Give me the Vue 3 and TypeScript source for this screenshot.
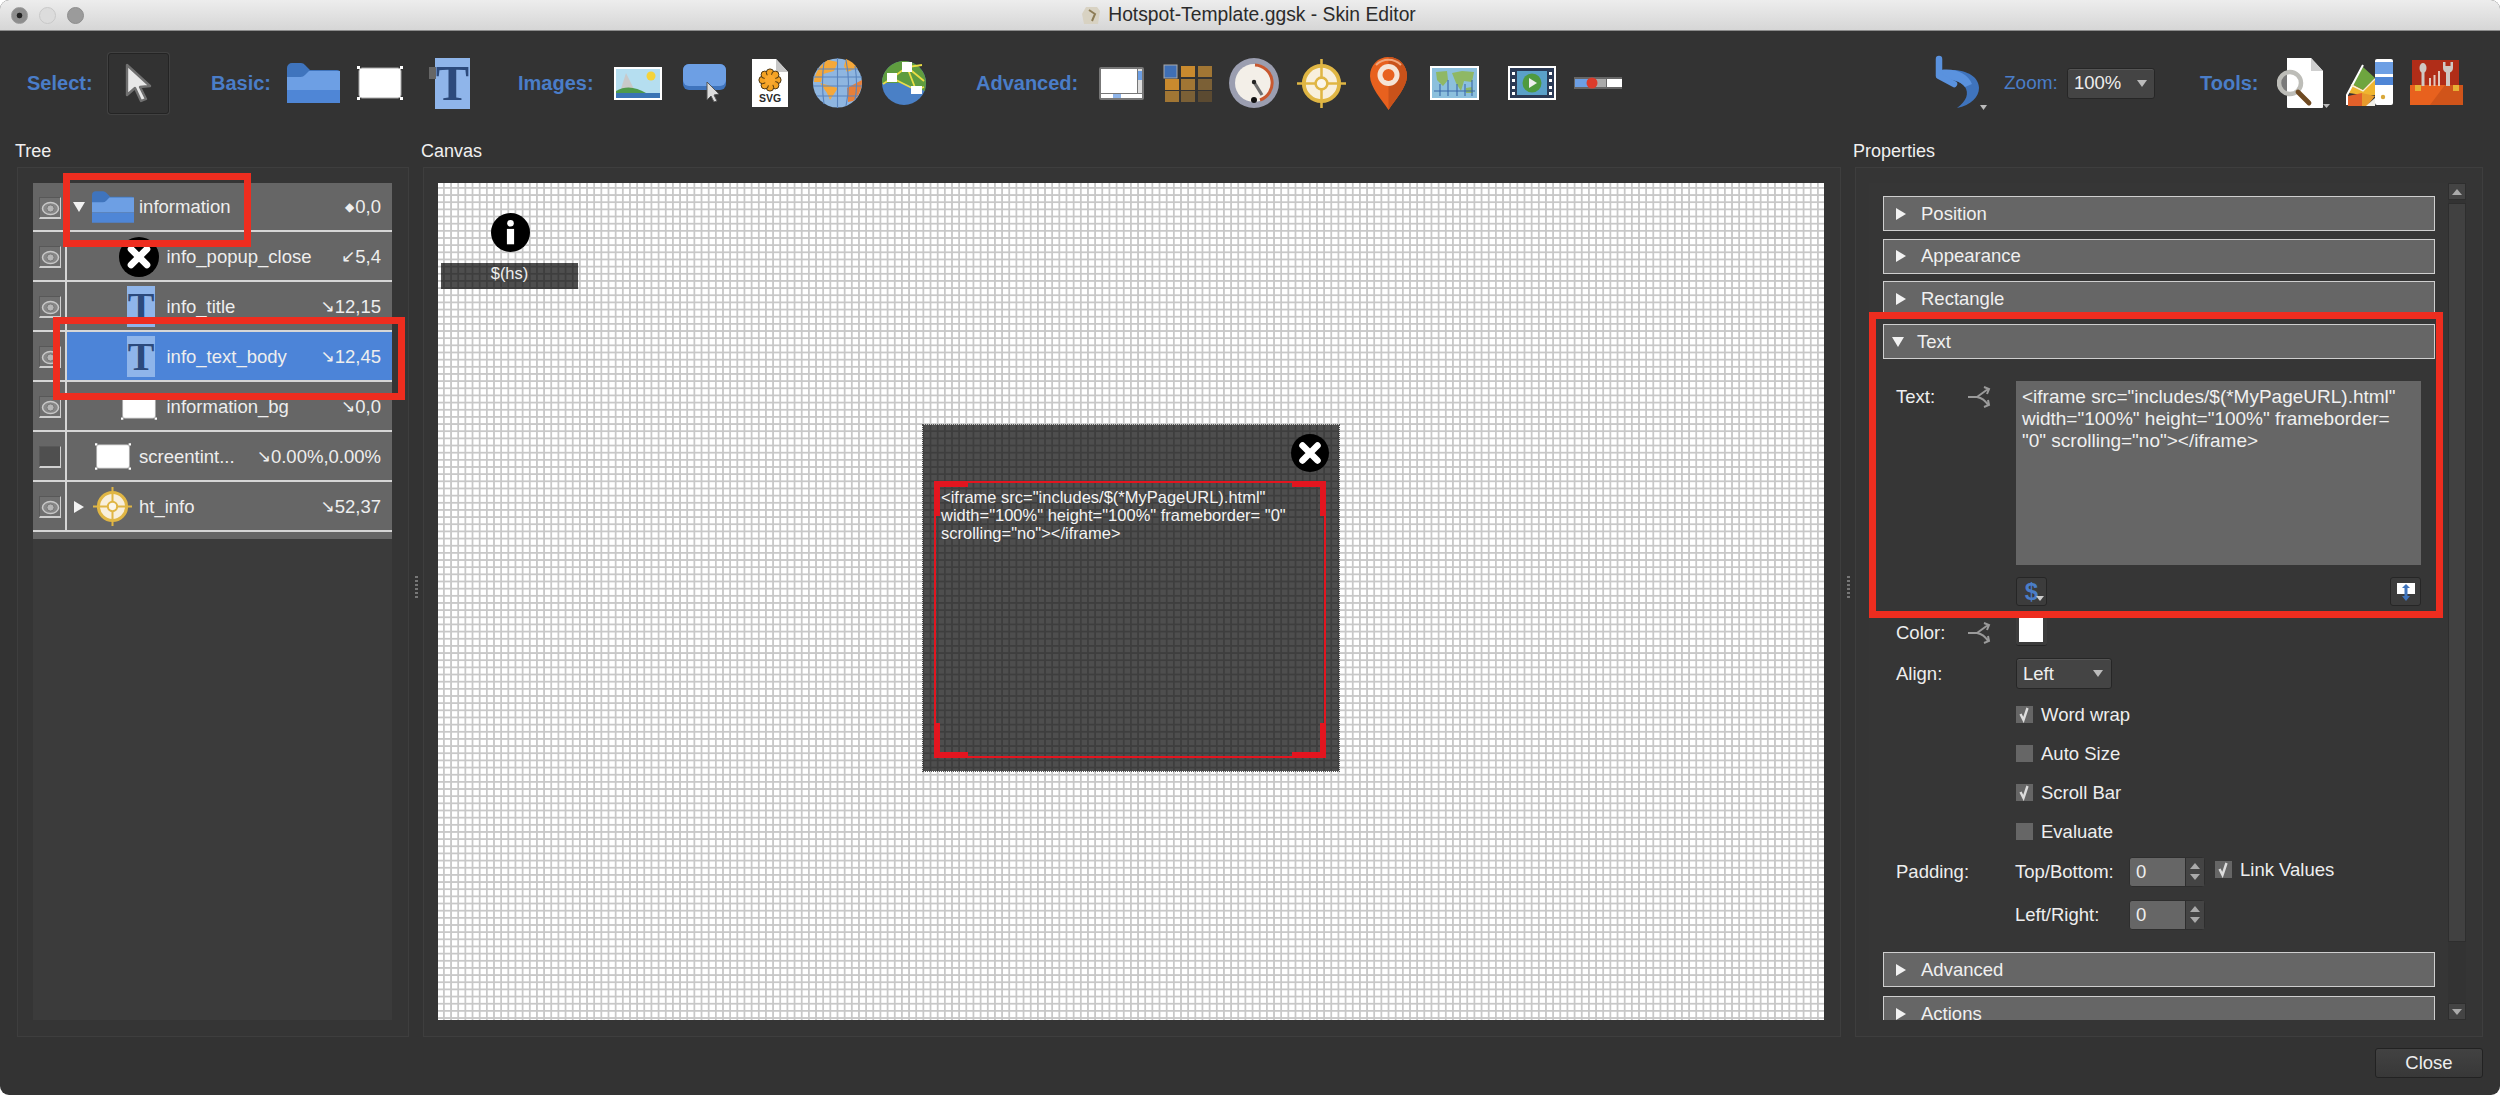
<script setup lang="ts">
interface TreeRow {
  name: string
  arrow: string
  value: string
  icon: string
  depth: number
  visible: boolean
  expander?: 'open' | 'closed'
  selected?: boolean
  iconClass: string
}

const rows: TreeRow[] = [
  { name: 'information', arrow: '◆', value: '0,0', icon: '#s-folder', depth: 0, visible: true, expander: 'open', iconClass: 'ic-folder' },
  { name: 'info_popup_close', arrow: '↙', value: '5,4', icon: '#s-close', depth: 1, visible: true, iconClass: 'ic-close' },
  { name: 'info_title', arrow: '↘', value: '12,15', icon: 'text', depth: 1, visible: true, iconClass: '' },
  { name: 'info_text_body', arrow: '↘', value: '12,45', icon: 'text', depth: 1, visible: true, selected: true, iconClass: '' },
  { name: 'information_bg', arrow: '↘', value: '0,0', icon: '#s-rect', depth: 1, visible: true, iconClass: 'ic-rect' },
  { name: 'screentint...', arrow: '↘', value: '0.00%,0.00%', icon: '#s-rect', depth: 0, visible: false, iconClass: 'ic-rect' },
  { name: 'ht_info', arrow: '↘', value: '52,37', icon: '#s-cross', depth: 0, visible: true, expander: 'closed', iconClass: 'ic-cross' }
]

const topSections = ['Position', 'Appearance', 'Rectangle']
const checks = [
  { label: 'Word wrap', on: true },
  { label: 'Auto Size', on: false },
  { label: 'Scroll Bar', on: true },
  { label: 'Evaluate', on: false }
]
const iframeCode = '<iframe src="includes/$(*MyPageURL).html" width="100%" height="100%" frameborder= "0" scrolling="no"></iframe>'
const petals = [0, 45, 90, 135, 180, 225, 270, 315].map((deg) => ({
  cx: 19 + 7.4 * Math.cos((deg * Math.PI) / 180),
  cy: 22 + 7.4 * Math.sin((deg * Math.PI) / 180)
}))
</script>

<template>
  <div class="win">
    <svg class="defs" width="0" height="0" aria-hidden="true">
      <symbol id="s-folder" viewBox="0 0 53 40">
        <path d="M0 5a5 5 0 0 1 5-5h9a5 5 0 0 1 4 2l5 5h27a3 3 0 0 1 3 3v6H0z" fill="#3f74bd" />
        <path d="M0 14h13a6 6 0 0 0 5-2l4-4h31v19H0z" fill="#6d9fe4" />
        <path d="M0 27h53v13H0z" fill="#4f86d6" />
      </symbol>
      <symbol id="s-close" viewBox="0 0 38 38">
        <circle cx="19" cy="19" r="19" fill="#000" />
        <path d="M11.500 11.500L26.500 26.500M26.500 11.500L11.500 26.500" stroke="#fff" stroke-width="6.500" stroke-linecap="round" />
      </symbol>
      <symbol id="s-rect" viewBox="0 0 46 34">
        <rect x="2" y="2" width="42" height="30" rx="3" fill="#fff" stroke="#a8a8a8" />
        <path d="M0 0h3v3H0zM43 0h3v3h-3zM0 31h3v3H0zM43 31h3v3h-3z" fill="#fff" />
      </symbol>
      <symbol id="s-cross" viewBox="0 0 50 50">
        <circle cx="25" cy="25" r="18" fill="#f8efdc" stroke="#e0b644" stroke-width="4" />
        <path d="M25 0v50M0 25h50" stroke="#e0b644" stroke-width="2.600" />
        <circle cx="25" cy="25" r="6" fill="#fbf6ea" stroke="#e0b644" stroke-width="2.600" />
      </symbol>
      <symbol id="s-cursor" viewBox="0 0 30 42">
        <path d="M3 3v30l8-7 6 13 5-2-6-12 10-1z" fill="#e8e8e8" stroke="#707070" stroke-width="2.400" stroke-linejoin="round" />
      </symbol>
      <symbol id="s-share" viewBox="0 0 24 22">
        <path d="M0 11h9M9 11L20 3M9 11c5 1 8 3 11 8M16 1l5 2-2 5M16 21l5-2-1-5" fill="none" stroke="#9a9a9a" stroke-width="2" />
      </symbol>
      <symbol id="s-eye" viewBox="0 0 21 21">
        <ellipse cx="10.500" cy="10.500" rx="8" ry="6" fill="#888" stroke="#c8c8c8" stroke-width="1.500" />
        <circle cx="10.500" cy="10.500" r="3.600" fill="#b5b5b5" stroke="#777" />
      </symbol>
    </svg>

    <header class="titlebar">
      <div class="lights">
        <span class="light l1"></span>
        <span class="light l2"></span>
        <span class="light l3"></span>
      </div>
      <div class="title">
        <svg class="title-ic" width="21" height="17" viewBox="0 0 21 17">
          <path d="M5 0h11l3 4-2 13H3L1 7z" fill="#d8d2c2" />
          <path d="M8 3l6 4-3 7" fill="none" stroke="#8d7c55" stroke-width="2" />
        </svg>
        <span>Hotspot-Template.ggsk - Skin Editor</span>
      </div>
    </header>

    <div class="toolbar">
      <span class="tb-label lb-select">Select:</span>
      <button class="select-btn">
        <svg width="30" height="42"><use href="#s-cursor" /></svg>
      </button>

      <span class="tb-label lb-basic">Basic:</span>
      <svg class="m-folder" width="53" height="40"><use href="#s-folder" /></svg>
      <svg class="m-rect" width="46" height="34"><use href="#s-rect" /></svg>
      <span class="t-ic m-text"><b>T</b></span>

      <span class="tb-label lb-images">Images:</span>
      <svg class="m-image" width="48" height="33" viewBox="0 0 48 33">
        <rect width="48" height="33" fill="#fff" />
        <rect x="2" y="2" width="44" height="29" fill="#b5def0" />
        <circle cx="37" cy="9" r="4.500" fill="#f5d33a" />
        <path d="M6 25L12 6l8 16z" fill="#c9c9c9" />
        <path d="M2 24c10-6 20-4 30 2v2H2z" fill="#4f9a4b" />
        <rect x="2" y="26" width="44" height="5" fill="#3a74b5" />
      </svg>
      <svg class="m-btn" width="43" height="38" viewBox="0 0 43 38">
        <rect y="0" width="43" height="26" rx="6" fill="#3f74bd" />
        <rect y="0" width="43" height="22" rx="6" fill="#6d9fe4" />
        <path d="M24 18v18l4-4 3 6 3-1-3-6 5-1z" fill="#ddd" stroke="#555" stroke-width="1" />
      </svg>
      <div class="svg-doc m-svg">
        <svg width="38" height="50" viewBox="0 0 38 50">
          <path d="M1 1h24l12 13v35H1z" fill="#fff" />
          <path d="M25 1v13h12z" fill="#c7c7c7" />
          <circle v-for="(p, i) in petals" :key="i" :cx="p.cx" :cy="p.cy" r="3.700" fill="#f4a223" stroke="#3a2a10" stroke-width=".9" />
          <circle cx="19" cy="22" r="5.500" fill="#f9a82e" />
        </svg>
        <span>SVG</span>
      </div>
      <svg class="m-globe" width="49" height="50" viewBox="0 0 49 50">
        <circle cx="24.500" cy="25" r="24.500" fill="#8fb6e0" />
        <path d="M1 24C2 14 8 6 15 2l10 2-4 9-11 3-2 8zM7 25l18 5-8 12-3-7z" fill="#f5a83a" />
        <path d="M33 1c5 2 9 5 11 9l-10 4-3-6z" fill="#f5a83a" />
        <path d="M34 30l15-8c0 9-3 16-9 21l-5 1z" fill="#e8803a" />
        <path d="M4 11h41M0 19h49M0 28h49M4 38h41M11 4c-2 14-2 28 0 42M24.500 0v50M33 2c3 14 3 32 0 46M42 8c2 12 2 24 0 34" fill="none" stroke="#5a84bd" stroke-width="1.100" />
      </svg>
      <svg class="m-globe2" width="44" height="44" viewBox="0 0 44 44">
        <circle cx="22" cy="22" r="22" fill="#4a80c6" />
        <path d="M0 22C0 10 10 0 22 0s22 10 22 22l-1 8-22-8z" fill="#5f9c3f" />
        <path d="M1 23L10 17M10 17L25 6 40 4M25 6L34 29M10 17l24 12M34 29l8-3M25 6l17 14" fill="none" stroke="#eadd45" stroke-width="1.800" />
        <rect x="20" y="1" width="10" height="10" fill="#fff" />
        <rect x="5" y="12" width="10" height="9" fill="#fff" />
        <rect x="29" y="25" width="11" height="8" fill="#fff" />
      </svg>

      <span class="tb-label lb-adv">Advanced:</span>
      <svg class="m-win" width="45" height="33" viewBox="0 0 45 33">
        <rect width="45" height="33" rx="2" fill="#777" />
        <rect x="2" y="2" width="36" height="24" fill="#fff" />
        <rect x="39" y="2" width="4" height="24" fill="#ddd" />
        <rect x="39" y="4" width="4" height="9" fill="#6d9fe4" />
        <rect x="2" y="27" width="41" height="4" fill="#fff" />
        <rect x="14" y="27" width="8" height="4" fill="#8fb5ea" />
      </svg>
      <svg class="m-grid" width="50" height="38" viewBox="0 0 50 38">
        <rect x="1" y="1" width="13" height="13" fill="#3f6fb5" stroke="#aaa" />
        <rect x="18" y="2" width="14" height="11" fill="#c98a2e" />
        <rect x="35" y="2" width="14" height="11" fill="#a17634" />
        <rect x="2" y="15" width="14" height="11" fill="#c98a2e" />
        <rect x="18" y="15" width="14" height="11" fill="#a17634" />
        <rect x="35" y="15" width="14" height="11" fill="#7b6036" />
        <rect x="2" y="27" width="14" height="11" fill="#a17634" />
        <rect x="18" y="27" width="14" height="11" fill="#7b6036" />
        <rect x="35" y="27" width="14" height="11" fill="#5b4a31" />
      </svg>
      <svg class="m-gauge" width="50" height="50" viewBox="0 0 50 50">
        <circle cx="25" cy="25" r="25" fill="#9b9eb0" />
        <circle cx="25" cy="25" r="19" fill="#f3efe8" />
        <path d="M26 7a18 18 0 0 1 5 35" fill="none" stroke="#c8582f" stroke-width="3" />
        <path d="M25 24L33 37" stroke="#6e6e6e" stroke-width="3.200" />
        <circle cx="25" cy="24" r="2.200" fill="#222" />
        <circle cx="25" cy="42" r="3" fill="#111" />
      </svg>
      <svg class="m-cross" width="49" height="49"><use href="#s-cross" /></svg>
      <svg class="m-pin" width="37" height="53" viewBox="0 0 37 53">
        <path d="M18.500 0C8 0 0 8 0 19c0 11 12 24 18.500 34C25 43 37 30 37 19 37 8 29 0 18.500 0z" fill="#e8611e" />
        <path d="M18.500 0C29 0 37 8 37 19c0 11-12 24-18.500 34z" fill="#c9521a" />
        <path d="M6 8c7-7 18-7 25 0" fill="none" stroke="#f0a67c" stroke-width="2" />
        <circle cx="18.500" cy="18" r="11" fill="#f5e4d6" />
        <circle cx="18.500" cy="18" r="6" fill="#e8611e" />
      </svg>
      <svg class="m-map" width="49" height="34" viewBox="0 0 49 34">
        <rect width="49" height="34" fill="#fff" />
        <rect x="2" y="2" width="45" height="30" fill="#8cc0dd" />
        <path d="M6 6l11-1 1 9-5 6-6-6zM22 7l10-2 12 1-2 10-8-1-3 10-5-8zM36 22l6-1 1 6h-7z" fill="#8fb864" />
        <path d="M10 18v12M18 14v16M27 18v12M35 18v12M42 14v16M4 25h41" stroke="#3b68a8" stroke-width="1.100" />
      </svg>
      <svg class="m-video" width="48" height="34" viewBox="0 0 48 34">
        <rect width="48" height="34" fill="#fff" />
        <rect x="2" y="2" width="44" height="30" fill="#2b3a55" />
        <rect x="9" y="5" width="30" height="24" fill="#5aa0c8" />
        <circle cx="24" cy="17" r="9.500" fill="#4f9a3f" />
        <path d="M21 12l8 5-8 5z" fill="#eee" />
        <path d="M4 6h3v3H4zM4 13h3v3H4zM4 20h3v3H4zM4 26h3v3H4zM41 6h3v3h-3zM41 13h3v3h-3zM41 20h3v3h-3zM41 26h3v3h-3z" fill="#fff" />
      </svg>
      <svg class="m-slider" width="48" height="12" viewBox="0 0 48 12">
        <rect width="48" height="12" fill="#666" />
        <rect x="1" y="2" width="14" height="8" fill="#6d9fe4" />
        <rect x="15" y="2" width="17" height="8" fill="#aaa" />
        <rect x="33" y="2" width="15" height="8" fill="#fff" />
        <circle cx="18" cy="6" r="5.500" fill="#dc3b2a" />
      </svg>

      <svg class="m-undo" width="52" height="56" viewBox="0 0 52 56">
        <path d="M6 16C27 12 44 20 44 33c0 9-8 17-22 20 10-7 12-15 8-21-4-6-14-8-24-9z" fill="#3f74bd" />
        <path d="M6 15c15-2 27 4 31 14l-7 3c-4-6-14-8-24-9z" fill="#5a92de" />
        <path d="M4 4v17l15 8" fill="none" stroke="#5a92de" stroke-width="6.500" stroke-linecap="round" stroke-linejoin="round" />
        <path d="M45 50h7l-3.500 5z" fill="#bbb" />
      </svg>
      <span class="tb-label lb-zoom">Zoom:</span>
      <div class="combo zoom-combo"><span>100%</span><i class="tri-down"></i></div>
      <span class="tb-label lb-tools">Tools:</span>
      <svg class="m-doc" width="53" height="50" viewBox="0 0 53 50">
        <path d="M10 0h24l12 13v36a1 1 0 0 1-1 1H11a1 1 0 0 1-1-1z" fill="#fff" />
        <path d="M34 0v13h12z" fill="#cfcfcf" />
        <circle cx="13" cy="25" r="11" fill="#fff" fill-opacity=".35" stroke="#bdbdb8" stroke-width="4.500" />
        <path d="M21 34l11 11" stroke="#6f4a22" stroke-width="4.800" stroke-linecap="round" />
        <path d="M46 46h7l-3.500 4z" fill="#bbb" />
      </svg>
      <svg class="m-pal" width="47" height="48" viewBox="0 0 47 48">
        <path d="M6 25L17 8l12 11-12 12z" fill="#6ea53f" />
        <path d="M3 34l3-9 11 6 12-12v17l-13 0z" fill="#efb52f" />
        <path d="M2 37l14-3v13H2z" fill="#e2602a" />
        <path d="M16 34l13 3-8 10h-5z" fill="#e79a2c" />
        <path d="M1 46V36L17 6" fill="none" stroke="#fff" stroke-width="2" />
        <path d="M5 26l12 6 12-12" fill="none" stroke="#f4f0d8" stroke-width="1.400" />
        <path d="M20 47l9-8v8z" fill="#f1efe8" />
        <rect x="29" y="0" width="18" height="46" rx="2" fill="#fff" />
        <rect x="29" y="3" width="18" height="12" fill="#6d9fe4" />
        <rect x="29" y="18" width="18" height="8" fill="#4f86d6" />
        <circle cx="37" cy="38" r="2.200" fill="#d9a83a" />
      </svg>
      <svg class="m-box" width="53" height="46" viewBox="0 0 53 46">
        <rect x="2" width="47" height="27" fill="#b02d18" />
        <rect x="0" y="25" width="53" height="20" fill="#e8611e" />
        <path d="M20 45l15-20h18v20z" fill="#d0541a" />
        <ellipse cx="13" cy="8" rx="3.500" ry="5" fill="#cfc9c4" />
        <rect x="11.500" y="11" width="3" height="15" fill="#cfc9c4" />
        <path d="M19 18h2v8h-2zM23.500 15h2v11h-2zM28 11h2v15h-2z" fill="#e2c8bd" />
        <path d="M33 2v6a5 5 0 0 0 3 4.500V26h4V12.500A5 5 0 0 0 43 8V2l-2.500 0v4h-5V2z" fill="#cfc9c4" />
        <rect x="5" y="25" width="6" height="6" fill="#e6b035" />
        <rect x="43" y="25" width="6" height="6" fill="#e6b035" />
      </svg>
    </div>

    <main class="main">
      <section class="col col-tree">
        <h2 class="col-title">Tree</h2>
        <div class="panel tree-panel">
          <div class="tree">
            <div v-for="row in rows" :key="row.name" class="row" :class="{ selected: row.selected }">
              <div class="eye-col">
                <span class="eye-box" :class="{ off: !row.visible }">
                  <svg v-if="row.visible" width="21" height="21"><use href="#s-eye" /></svg>
                </span>
              </div>
              <div class="row-body" :class="'depth-' + row.depth">
                <span class="expander">
                  <i v-if="row.expander === 'open'" class="tri-open"></i>
                  <i v-else-if="row.expander === 'closed'" class="tri-closed"></i>
                </span>
                <span class="icon-slot">
                  <span v-if="row.icon === 'text'" class="t-ic t-small"><b>T</b></span>
                  <svg v-else :class="row.iconClass"><use :href="row.icon" /></svg>
                </span>
                <span class="name">{{ row.name }}</span>
                <span class="val"><small :class="{ dia: row.arrow === '◆' }">{{ row.arrow }}</small>{{ row.value }}</span>
              </div>
            </div>
            <div class="row-stub"></div>
          </div>
        </div>
      </section>

      <div class="splitter"><i></i></div>

      <section class="col col-canvas">
        <h2 class="col-title">Canvas</h2>
        <div class="panel canvas-panel">
          <div class="canvas">
            <svg class="node-info" width="39" height="39" viewBox="0 0 38 38">
              <circle cx="19" cy="19" r="19" fill="#000" />
              <circle cx="19" cy="10" r="3.200" fill="#fff" />
              <rect x="15.500" y="15.500" width="7" height="15" fill="#fff" />
            </svg>
            <div class="node-hs">$(hs)</div>
            <div class="node-popup">
              <svg class="node-close" width="38" height="38"><use href="#s-close" /></svg>
              <div class="node-frame">
                <p class="node-text">&lt;iframe src="includes/$(*MyPageURL).html"<br />width="100%" height="100%" frameborder= "0"<br />scrolling="no"&gt;&lt;/iframe&gt;</p>
                <span class="corner tl"></span>
                <span class="corner tr"></span>
                <span class="corner bl"></span>
                <span class="corner br"></span>
              </div>
            </div>
          </div>
        </div>
      </section>

      <div class="splitter"><i></i></div>

      <section class="col col-props">
        <h2 class="col-title">Properties</h2>
        <div class="panel props-panel">
          <div class="props-scroll">
            <div v-for="s in topSections" :key="s" class="sec"><i class="tri-closed"></i>{{ s }}</div>
            <div class="sec"><i class="tri-open"></i>Text</div>

            <div class="frow text-row">
              <label>Text:</label>
              <svg class="share" width="24" height="22"><use href="#s-share" /></svg>
              <div class="textarea">{{ iframeCode }}</div>
            </div>
            <div class="frow btn-row">
              <span></span><span></span>
              <div class="btn-line">
                <button class="mini"><b>$</b><i class="mini-tri"></i></button>
                <button class="mini">
                  <svg width="24" height="24" viewBox="0 0 24 24">
                    <rect x="3" y="3" width="18" height="11" fill="#fff" />
                    <path d="M12 4l4 4h-2.500v8H16l-4 5-4-5h2.500V8H8z" fill="#3f74bd" />
                  </svg>
                </button>
              </div>
            </div>
            <div class="frow color-row">
              <label>Color:</label>
              <svg class="share" width="24" height="22"><use href="#s-share" /></svg>
              <div class="swatch"><span></span></div>
            </div>
            <div class="frow align-row">
              <label>Align:</label>
              <span></span>
              <div class="combo align-combo"><span>Left</span><i class="tri-down"></i></div>
            </div>
            <div v-for="c in checks" :key="c.label" class="frow check-row">
              <span></span><span></span>
              <div class="check-line">
                <span class="check"><svg v-if="c.on" width="17" height="17" viewBox="0 0 17 17"><path d="M4.500 8l3 6 4-12" fill="none" stroke="#ddd" stroke-width="2.400" /></svg></span>
                {{ c.label }}
              </div>
            </div>
            <div class="frow pad-row pad-first">
              <label>Padding:</label>
              <span></span>
              <div class="pad-line">
                <span class="pad-name">Top/Bottom:</span>
                <div class="spin"><span>0</span><em><i class="up"></i><i class="down"></i></em></div>
                <div class="check-line link">
                  <span class="check"><svg width="17" height="17" viewBox="0 0 17 17"><path d="M4.500 8l3 6 4-12" fill="none" stroke="#ddd" stroke-width="2.400" /></svg></span>
                  Link Values
                </div>
              </div>
            </div>
            <div class="frow pad-row pad-second">
              <span></span><span></span>
              <div class="pad-line">
                <span class="pad-name">Left/Right:</span>
                <div class="spin"><span>0</span><em><i class="up"></i><i class="down"></i></em></div>
              </div>
            </div>
            <div class="sec sec-adv"><i class="tri-closed"></i>Advanced</div>
            <div class="sec sec-act"><i class="tri-closed"></i>Actions</div>
          </div>
          <div class="vscroll">
            <span class="sb-btn"><i class="up"></i></span>
            <span class="sb-thumb"></span>
            <span class="sb-btn sb-end"><i class="down"></i></span>
          </div>
        </div>
      </section>
    </main>

    <footer class="footer"><button class="close-btn">Close</button></footer>

    <div class="mark mark-a"></div>
    <div class="mark mark-b"></div>
    <div class="mark mark-c"></div>
  </div>
</template>

<style>
html, body { margin: 0; background: #fff; }
</style>

<style scoped>
* { box-sizing: border-box; }
.win {
  position: relative;
  width: 2500px;
  height: 1095px;
  display: flex;
  flex-direction: column;
  background: #333;
  color: #eee;
  font-family: "Liberation Sans", Arial, sans-serif;
  font-size: 18.500px;
  border-radius: 9px;
  overflow: hidden;
}
.defs { display: block; height: 0; width: 0; }
svg { display: block; flex: none; }
button { font: inherit; color: inherit; padding: 0; }

.titlebar {
  position: relative;
  height: 31px;
  flex: none;
  display: flex;
  align-items: center;
  justify-content: center;
  background: linear-gradient(#ededed, #d6d6d6);
  border-bottom: 1px solid #8c8c8c;
  color: #2b2b2b;
}
.lights { position: absolute; left: 11px; top: 7px; display: flex; gap: 11px; }
.light { width: 17px; height: 17px; border-radius: 50%; border: 1px solid #999; }
.l1 { background: radial-gradient(circle, #222 0 2.500px, #8d8d8d 3.200px); }
.l2 { background: #dcdcdc; border-color: #c8c8c8; }
.l3 { background: #9b9b9b; border-color: #8e8e8e; }
.title { display: flex; align-items: center; gap: 6px; font-size: 19.300px; margin-left: -3px; }

.toolbar {
  height: 104px;
  flex: none;
  display: flex;
  align-items: center;
  padding: 0 37px 0 27px;
}
.tb-label { color: #4a7dc8; font-weight: 700; font-size: 20px; white-space: nowrap; }
.lb-select { width: 67px; }
.select-btn {
  margin-left: 14px;
  width: 61px;
  height: 61px;
  background: #323232;
  border: 1px solid #242424;
  border-radius: 3px;
  box-shadow: 0 0 0 1px #414141;
  display: flex;
  align-items: center;
  justify-content: center;
}
.t-ic { position: relative; flex: none; display: flex; justify-content: flex-end; width: 41px; height: 51px; }
.t-ic::before { content: ""; position: absolute; left: 0; top: 9px; width: 7px; height: 12px; background: #666; }
.t-ic b {
  display: block;
  width: 35px;
  height: 51px;
  background: #8fb5ea;
  color: #2c4a7c;
  font-family: "Liberation Serif", "Times New Roman", serif;
  font-weight: 700;
  font-size: 50px;
  line-height: 51px;
  text-align: center;
}
.t-small { width: 33px; height: 41px; }
.t-small::before { display: none; }
.t-small b { width: 28px; height: 41px; font-size: 40px; line-height: 41px; }
.svg-doc { position: relative; flex: none; width: 38px; height: 50px; }
.svg-doc span {
  position: absolute;
  left: 0;
  right: 0;
  top: 33px;
  text-align: center;
  color: #2a2a2a;
  font-weight: 700;
  font-size: 10.500px;
  line-height: 15px;
}
.lb-basic { width: 57px; margin-left: 42px; }
.m-folder { margin-left: 19px; }
.m-rect { margin-left: 17px; }
.m-text { margin-left: 26px; }
.lb-images { width: 75px; margin-left: 48px; }
.m-image { margin-left: 21px; }
.m-btn { margin-left: 21px; }
.m-svg { margin-left: 25px; }
.m-globe { margin-left: 24px; }
.m-globe2 { margin-left: 20px; }
.lb-adv { width: 101px; margin-left: 50px; }
.m-win { margin-left: 22px; }
.m-grid { margin-left: 19px; }
.m-gauge { margin-left: 16px; }
.m-cross { margin-left: 18px; }
.m-pin { margin-left: 24px; }
.m-map { margin-left: 23px; }
.m-video { margin-left: 29px; }
.m-slider { margin-left: 18px; }
.m-undo { margin-left: auto; }
.lb-zoom { width: 52px; margin-left: 17px; font-weight: 400; font-size: 19px; }
.combo {
  display: flex;
  align-items: center;
  justify-content: space-between;
  background: #444;
  border: 1px solid #262626;
  border-radius: 3px;
  box-shadow: inset 0 1px 0 #555;
}
.zoom-combo { width: 88px; height: 31px; margin-left: 11px; padding: 0 7px 0 6px; }
.tri-down { width: 0; height: 0; border-left: 5.500px solid transparent; border-right: 5.500px solid transparent; border-top: 7px solid #bbb; }
.lb-tools { width: 58px; margin-left: 45px; }
.m-doc { margin-left: 19px; }
.m-pal { margin-left: 16px; }
.m-box { margin-left: 17px; }

.main { flex: 1; min-height: 0; display: flex; padding: 3px 17px 0; }
.col { display: flex; flex-direction: column; }
.col-tree { width: 392px; }
.col-canvas { width: 1418px; }
.col-props { width: 628px; }
.col-title {
  margin: 0 0 0 -2px;
  height: 29px;
  font-size: 18px;
  font-weight: 400;
  line-height: 27px;
  color: #f0f0f0;
}
.panel { height: 870px; border: 1px solid #3e3e3e; background: #353535; }
.splitter { width: 14px; display: flex; align-items: center; justify-content: center; }
.splitter i { width: 3px; height: 23px; background: repeating-linear-gradient(#777 0 2px, transparent 2px 4px); }

.tree-panel { padding: 15px 16px 16px 15px; }
.tree { height: 100%; background: #3b3b3b; }
.row { height: 50px; display: flex; background: #666; border-bottom: 2px solid #d6d6d6; }
.row:first-child { height: 49px; }
.row-stub { height: 7px; background: #666; }
.eye-col {
  width: 34px;
  flex: none;
  border-right: 2px solid #d6d6d6;
  padding: 14px 0 0 6px;
}
.eye-box {
  display: block;
  width: 22px;
  height: 22px;
  background: #707070;
  border-right: 1px solid #cfcfcf;
  border-bottom: 2px solid #cfcfcf;
  border-top: 1px solid #585858;
  border-left: 1px solid #585858;
}
.eye-box.off { background: #4f4f4f; }
.row-body { flex: 1; min-width: 0; display: flex; align-items: center; padding: 1px 11px 0 0; }
.depth-0 { padding-left: 2px; }
.depth-1 { padding-left: 48px; }
.selected .row-body { background: #4c84d8; }
.expander { width: 20px; flex: none; display: flex; justify-content: center; }
.depth-1 .expander { display: none; }
.tri-open { display: block; width: 0; height: 0; border-left: 6.500px solid transparent; border-right: 6.500px solid transparent; border-top: 10px solid #f2f2f2; }
.tri-closed { display: block; width: 0; height: 0; border-top: 6.500px solid transparent; border-bottom: 6.500px solid transparent; border-left: 10px solid #f2f2f2; }
.icon-slot { width: 47px; flex: none; display: flex; justify-content: center; }
.ic-folder { width: 42px; height: 32px; }
.ic-close { width: 40px; height: 40px; }
.ic-rect { width: 36px; height: 27px; }
.ic-cross { width: 39px; height: 39px; }
.name { margin-left: 3px; white-space: nowrap; }
.depth-1 .name { margin-left: 4.500px; }
.val { margin-left: auto; white-space: nowrap; display: flex; align-items: center; }
.val small { font-family: "DejaVu Sans", sans-serif; font-size: 17px; line-height: 1; }
.val small.dia { font-size: 12px; margin-right: 1px; }

.canvas-panel { padding: 15px 16px 16px 14px; }
.canvas {
  position: relative;
  height: 100%;
  background-color: #fff;
  background-image:
    linear-gradient(to right, #c8c8c8 2px, transparent 2px),
    linear-gradient(to bottom, #c8c8c8 2px, transparent 2px);
  background-size: 7.170px 7.170px;
  background-position: 5px 4px;
  overflow: hidden;
}
.node-info { position: absolute; left: 53px; top: 30px; }
.node-hs {
  position: absolute;
  left: 3px;
  top: 80px;
  width: 137px;
  height: 26px;
  background: rgba(6, 6, 6, 0.71);
  color: #eee;
  text-align: center;
  font-size: 16.500px;
  line-height: 20px;
}
.node-popup {
  position: absolute;
  left: 485px;
  top: 242px;
  width: 416px;
  height: 346px;
  background: rgba(6, 6, 6, 0.71);
  outline: 1px dotted #555;
}
.node-close { position: absolute; left: 368px; top: 9px; }
.node-frame {
  position: absolute;
  left: 11px;
  top: 56px;
  width: 392px;
  height: 277px;
  border: 2.500px solid #e3151f;
}
.node-text {
  margin: 0;
  padding: 5px 0 0 5px;
  font-size: 16.500px;
  line-height: 18px;
  color: #f4f4f4;
  white-space: nowrap;
}
.corner { position: absolute; width: 34px; height: 35px; border: 0 solid #e3151f; }
.tl { left: -2px; top: -2px; border-top-width: 6px; border-left-width: 6px; }
.tr { right: -2px; top: -2px; border-top-width: 6px; border-right-width: 6px; }
.bl { left: -2px; bottom: -2px; border-bottom-width: 6px; border-left-width: 6px; }
.br { right: -2px; bottom: -2px; border-bottom-width: 6px; border-right-width: 6px; }

.props-panel { padding: 15px 16px 16px 13px; display: flex; }
.props-scroll { flex: 1; min-width: 0; height: 100%; overflow: hidden; padding: 13px 13px 0 14px; background: #363636; }
.sec {
  height: 35px;
  margin-bottom: 7.700px;
  display: flex;
  align-items: center;
  background: #666;
  border: 1.500px solid #cfcfcf;
  color: #f0f0f0;
}
.sec i { margin: 0 15px 0 12px; }
.sec .tri-open { margin: 0 13px 0 8px; }
.sec-adv { margin-top: 22.500px; margin-bottom: 9px; }
.frow { display: grid; grid-template-columns: 72px 48px 1fr; padding-left: 13px; align-items: start; }
.frow label { line-height: 22px; }
.text-row { margin-top: 22px; }
.text-row label { padding-top: 5px; }
.share { margin-top: 5px; }
.textarea {
  width: 405px;
  height: 184px;
  background: #666;
  padding: 5px 6px;
  font-size: 19px;
  line-height: 22px;
  color: #f0f0f0;
}
.btn-row { margin-top: 12px; }
.btn-line { width: 405px; display: flex; justify-content: space-between; }
.mini {
  position: relative;
  width: 31px;
  height: 29px;
  background: #3c3c3c;
  border: 1px solid #262626;
  border-radius: 3px;
  display: flex;
  align-items: center;
  justify-content: center;
}
.mini b { color: #4a7dc8; font-size: 24px; }
.mini-tri { position: absolute; right: 2px; bottom: 4px; width: 0; height: 0; border-left: 4px solid transparent; border-right: 4px solid transparent; border-top: 5px solid #ccc; }
.color-row { margin-top: 12px; }
.color-row label { padding-top: 4px; }
.color-row .share { margin-top: 4px; }
.swatch { width: 31px; height: 28px; background: #3c3c3c; border-radius: 0 0 3px 3px; border-bottom: 1px solid #262626; padding: 0 3px; }
.swatch span { display: block; width: 24px; height: 24px; background: #fff; }
.align-row { margin-top: 12px; align-items: center; }
.align-combo { width: 96px; height: 31px; padding: 0 8px 0 6px; }
.check-row { margin-top: 22px; }
.align-row + .check-row { margin-top: 16.500px; }
.check-line { display: flex; align-items: center; gap: 8px; height: 17px; line-height: 17px; white-space: nowrap; }
.check { width: 17px; height: 17px; background: #666; flex: none; }
.pad-first { margin-top: 17px; align-items: center; }
.pad-second { margin-top: 13px; align-items: center; }
.pad-line { display: flex; align-items: center; }
.pad-name { width: 114px; margin-left: -1px; white-space: nowrap; }
.spin {
  width: 76px;
  height: 30px;
  display: flex;
  background: #666;
  border: 1px solid #2e2e2e;
  border-radius: 3px;
}
.spin span { width: 55px; padding-left: 6px; line-height: 28px; }
.spin em { flex: 1; background: #444; display: flex; flex-direction: column; align-items: center; justify-content: center; gap: 5px; border-left: 1px solid #2e2e2e; }
.up { display: block; width: 0; height: 0; border-left: 5px solid transparent; border-right: 5px solid transparent; border-bottom: 6px solid #aaa; }
.down { display: block; width: 0; height: 0; border-left: 5px solid transparent; border-right: 5px solid transparent; border-top: 6px solid #aaa; }
.link { margin-left: 10px; margin-top: -4px; }
.vscroll { width: 18px; flex: none; display: flex; flex-direction: column; gap: 3px; background: #333; }
.sb-btn { height: 17px; flex: none; background: #444; border: 1px solid #2e2e2e; display: flex; align-items: center; justify-content: center; }
.sb-thumb { height: 739px; flex: none; background: #414141; border: 1px solid #2e2e2e; }
.sb-end { margin-top: auto; }

.footer { height: 58px; flex: none; padding: 11px 17px 0 0; display: flex; justify-content: flex-end; }
.close-btn {
  width: 108px;
  height: 30px;
  background: linear-gradient(#424242, #383838);
  border: 1px solid #222;
  border-radius: 3px;
  color: #eee;
  font-size: 18.500px;
}

.mark { position: absolute; border: 7px solid #ee2d1f; pointer-events: none; }
.mark-a { left: 63px; top: 173px; width: 188px; height: 74px; }
.mark-b { left: 53px; top: 317px; width: 352px; height: 83px; }
.mark-c { left: 1869px; top: 312px; width: 574px; height: 306px; }
</style>
